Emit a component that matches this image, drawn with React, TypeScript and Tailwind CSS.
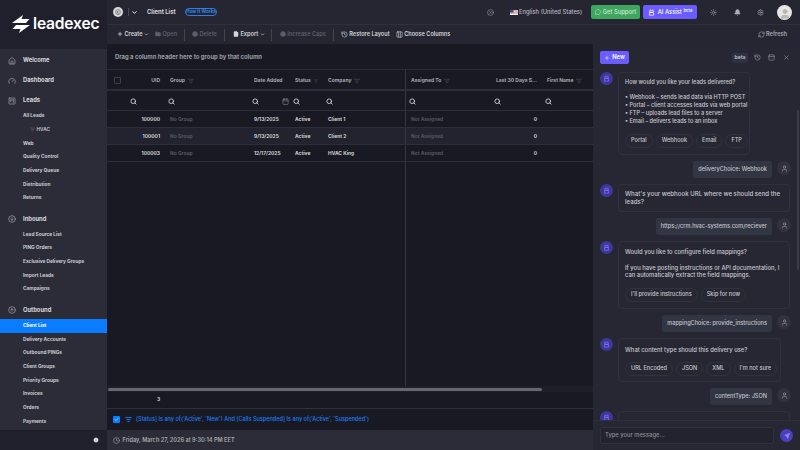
import React from "react";
import {
  Bell,
  Calendar,
  ChevronDown,
  CircleArrowDown,
  CircleArrowUp,
  CircleX,
  Check,
  Clock,
  Columns3,
  FileText,
  Folder,
  Gauge,
  History,
  House,
  Info,
  ListFilter,
  MessageCircle,
  PanelTop,
  Plus,
  RefreshCw,
  Search,
  Send,
  Settings,
  Sun,
  SquareKanban,
  User,
  X,
} from "lucide-react";

// ---- Data ----
const leadLinks = ["All Leads", "HVAC", "Web", "Quality Control", "Delivery Queue", "Distribution", "Returns"];
const inboundLinks = ["Lead Source List", "PING Orders", "Exclusive Delivery Groups", "Import Leads", "Campaigns"];
const outboundLinks = ["Client List", "Delivery Accounts", "Outbound PINGs", "Client Groups", "Priority Groups", "Invoices", "Orders", "Payments"];

const rows = [
  { uid: "100000", date: "9/13/2025", company: "Client 1" },
  { uid: "100001", date: "9/13/2025", company: "Client 2" },
  { uid: "100003", date: "12/17/2025", company: "HVAC King" },
];

const gridCols = "grid grid-cols-[20px_38px_84px_41px_33px_83px_85px_51px_51px]";

// ---- Small drawings ----
function BotIcon({ className }: { className?: string }) {
  return (
    <svg viewBox="0 0 16 16" className={className} fill="none" stroke="currentColor" strokeWidth="1.7">
      <path d="M5 1v3M11 1v3" />
      <path d="M4 4h8v4H4zM4 8h8l1 3v3H3v-3z" />
    </svg>
  );
}

function Logo() {
  return (
    <div className="flex h-[49px] items-center bg-[#1f202c] pl-[12px] pb-[1px]">
      <svg viewBox="0 0 18 18" className="h-[18px] w-[18px] text-white" fill="currentColor">
        <path d="M0 8 L11 0 L9.5 4 H17.5 L14 8 Z" />
        <path d="M18 10 L7 18 L8.5 14 H0.5 L4 10 Z" />
      </svg>
      <span className="ml-[3px] text-[15.6px] leading-none font-semibold tracking-[-0.2px] text-white">leadexec</span>
    </div>
  );
}

function NavHeader({ icon, label, className }: { icon: React.ReactNode; label: string; className?: string }) {
  return (
    <div className={`flex h-[20px] items-center pt-[3px] pl-[7.5px] text-[5.8px] font-bold text-[#d9d9de] ${className ?? ""}`}>
      <span className="flex w-[15.5px] text-[#a5a6ae]">{icon}</span>
      {label}
    </div>
  );
}

function NavLink({ label }: { label: string }) {
  const active = label === "Client List";
  if (label === "HVAC") {
    return (
      <div className="flex h-[13.67px] items-center pl-[30px] text-[4.8px] font-semibold text-[#c4c5cc]">
        <ListFilter className="mr-[1.5px] h-[5px] w-[5px] text-[#777884]" />
        {label}
      </div>
    );
  }
  return (
    <div
      className={`flex h-[13.67px] items-center pl-[23px] text-[4.8px] font-bold ${
        active ? "bg-[#0a7cff] text-white" : "text-[#c9cad0]"
      }`}
    >
      {label}
    </div>
  );
}

function Sidebar() {
  return (
    <aside className="flex h-full w-[107px] shrink-0 flex-col bg-[#2b2c38]">
      <Logo />
      <nav className="flex-1 overflow-hidden">
        <NavHeader icon={<House className="h-[8px] w-[8px]" />} label="Welcome" />
        <NavHeader icon={<Gauge className="h-[8px] w-[8px]" />} label="Dashboard" />
        <NavHeader icon={<SquareKanban className="h-[8px] w-[8px]" />} label="Leads" />
        {leadLinks.map((l) => (
          <NavLink key={l} label={l} />
        ))}
        <NavHeader className="mt-[3px]" icon={<CircleArrowDown className="h-[8px] w-[8px]" />} label="Inbound" />
        {inboundLinks.map((l) => (
          <NavLink key={l} label={l} />
        ))}
        <NavHeader className="mt-[3px]" icon={<CircleArrowUp className="h-[8px] w-[8px]" />} label="Outbound" />
        {outboundLinks.map((l) => (
          <NavLink key={l} label={l} />
        ))}
      </nav>
      <div className="flex h-[20px] items-center justify-end bg-[#1f202c] pr-[8px]">
        <Info className="h-[6px] w-[6px] fill-white text-[#1f202c]" />
      </div>
    </aside>
  );
}

// ---- Top bars ----
function TopBar() {
  return (
    <header className="flex h-[24px] items-center bg-[#252632] text-[#d6d7dc]">
      <span className="ml-[6px] flex h-[10px] w-[10px] items-center justify-center rounded-full bg-[#d8d8da]">
        <CircleArrowDown className="h-[6px] w-[6px] rotate-90 text-[#44454f]" />
      </span>
      <span className="ml-[5px] h-[8px] w-px bg-[#4a4b57]" />
      <ChevronDown className="ml-[2px] h-[7px] w-[7px] stroke-[3] text-white" />
      <span className="ml-[9px] w-[29px] text-[5.9px] font-bold whitespace-nowrap">Client List</span>
      <span className="ml-[9px] flex h-[8px] w-[32px] items-center justify-center rounded-full border border-[#2f7fe0] text-[4.6px] font-semibold whitespace-nowrap text-[#3b8ef0]">
        How It Works
      </span>
      <CircleX className="ml-[270px] h-[7px] w-[7px] text-[#9a9ba3]" />
      <svg viewBox="0 0 8 5" className="ml-[16px] h-[5px] w-[8px]">
        <rect width="8" height="5" fill="#eee" />
        <path d="M0 1h8M0 3h8" stroke="#c5494e" strokeWidth=".7" />
        <rect width="3.4" height="2.6" fill="#3a4f8e" />
      </svg>
      <span className="ml-[1px] w-[72px] text-[5.8px] font-medium whitespace-nowrap text-[#b6b7bf]">English (United States)</span>
      <button className="flex h-[14px] w-[49px] items-center justify-center gap-[2px] rounded-[2px] bg-[#3ea65f] text-[5.8px] font-medium text-[#cfe9d6]">
        <MessageCircle className="h-[6px] w-[6px]" />
        Get Support
      </button>
      <button className="ml-[3px] flex h-[14px] w-[54px] items-center justify-center gap-[3px] rounded-[2px] bg-[#6a5cff] text-[5.8px] font-medium text-white">
        <BotIcon className="h-[7px] w-[7px]" />
        <span>
          AI Assist <sup className="text-[4.2px]">beta</sup>
        </span>
      </button>
      <Sun className="ml-[13px] h-[7px] w-[7px] text-[#aeafb6]" />
      <Bell className="ml-[17px] h-[7px] w-[7px] fill-[#aeafb6] text-[#aeafb6]" />
      <Settings className="ml-[16px] h-[7px] w-[7px] text-[#aeafb6]" />
      <span className="ml-[13px] flex h-[15px] w-[15px] items-end justify-center overflow-hidden rounded-full bg-[#e6e5e0]">
        <User className="h-[12px] w-[12px] fill-[#b9b8b2] text-[#b9b8b2]" />
      </span>
    </header>
  );
}

function ToolButton({ icon, label, dim, caret, className }: { icon: React.ReactNode; label: string; dim?: boolean; caret?: boolean; className?: string }) {
  return (
    <span className={`flex items-center gap-[1.5px] text-[5.6px] font-semibold whitespace-nowrap ${dim ? "text-[#5d5e69]" : "text-[#d5d6db]"} ${className ?? ""}`}>
      {icon}
      {label}
      {caret && <ChevronDown className="h-[5px] w-[5px] stroke-[3]" />}
    </span>
  );
}

function Divider({ className }: { className: string }) {
  return <span className={`h-[12px] w-px bg-[#43444f] ${className}`} />;
}

function Toolbar() {
  return (
    <div className="flex h-[20px] items-center border-t border-[#2f303c] bg-[#252632] pl-[10px]">
      <ToolButton icon={<Plus className="h-[6px] w-[6px] stroke-[3]" />} label="Create" caret />
      <ToolButton className="ml-[6px]" dim icon={<Folder className="h-[6px] w-[6px] fill-current" />} label="Open" />
      <Divider className="ml-[7px]" />
      <ToolButton className="ml-[7px]" dim icon={<CircleX className="h-[6px] w-[6px] fill-current text-[#5d5e69]" />} label="Delete" />
      <Divider className="ml-[7px]" />
      <ToolButton className="ml-[8px]" icon={<FileText className="h-[6px] w-[6px] fill-current" />} label="Export" caret />
      <Divider className="ml-[6px]" />
      <ToolButton className="ml-[8px]" dim icon={<CircleX className="h-[6px] w-[6px] fill-current text-[#5d5e69]" />} label="Increase Caps" />
      <Divider className="ml-[7px]" />
      <ToolButton className="ml-[7px]" icon={<History className="h-[7px] w-[7px]" />} label="Restore Layout" />
      <ToolButton className="ml-[6px]" icon={<Columns3 className="h-[7px] w-[7px]" />} label="Choose Columns" />
      <span className="flex-1" />
      <ToolButton className="mr-[13px] font-medium !text-[#a9aab2]" icon={<RefreshCw className="h-[7px] w-[7px]" />} label="Refresh" />
    </div>
  );
}

// ---- Data grid ----
function HeadCell({ label, filter, right, border }: { label?: string; filter?: boolean; right?: boolean; border?: boolean }) {
  return (
    <div
      className={`flex items-center gap-[3px] px-[5px] pt-[2px] text-[5px] font-bold whitespace-nowrap text-[#a6a7af] ${right ? "justify-end" : ""} ${
        border ? "border-r border-[#353642]" : ""
      }`}
    >
      {label}
      {filter && <ListFilter className="h-[6px] w-[6px] text-[#5e5f6a]" />}
    </div>
  );
}

function SearchCell({ border, calendar }: { border?: boolean; calendar?: boolean }) {
  return (
    <div className={`flex items-center justify-between px-[2.5px] pt-[2px] ${border ? "border-r border-[#353642]" : ""}`}>
      <Search className="h-[7px] w-[7px] stroke-[3] text-[#d5d6db]" />
      {calendar && <Calendar className="mr-[-1px] h-[7px] w-[7px] text-[#8d8e96]" />}
    </div>
  );
}

function DataCell({ children, right, dim, border }: { children?: React.ReactNode; right?: boolean; dim?: boolean; border?: boolean }) {
  return (
    <div
      className={`flex items-center px-[5px] pt-[2px] text-[4.9px] font-bold whitespace-nowrap ${right ? "justify-end" : ""} ${
        dim ? "text-[#55565f]" : "text-[#d0d1d6]"
      } ${border ? "border-r border-[#353642]" : ""}`}
    >
      {children}
    </div>
  );
}

function DataGrid() {
  return (
    <section className="flex h-full w-[486px] shrink-0 flex-col bg-[#181923]">
      <div className="flex h-[26px] items-center border-b border-[#2b2c38] pt-[1px] pl-[8px] text-[5.9px] font-bold text-[#9c9da5]">
        Drag a column header here to group by that column
      </div>

      <div className={`${gridCols} h-[21px] border-b-2 border-[#2d2e3a]`}>
        <div className="flex items-center justify-center pt-[1px] pl-[1px]">
          <span className="h-[7px] w-[7px] rounded-[1px] border border-[#3c3d48]" />
        </div>
        <HeadCell label="UID" right />
        <HeadCell label="Group" filter />
        <HeadCell label="Date Added" />
        <HeadCell label="Status" filter />
        <HeadCell label="Company" filter border />
        <HeadCell label="Assigned To" filter />
        <HeadCell label="Last 30 Days S..." right />
        <HeadCell label="First Name" filter />
      </div>

      <div className={`${gridCols} h-[20px] border-b border-[#2d2e3a]`}>
        <div />
        <SearchCell />
        <SearchCell />
        <SearchCell calendar />
        <SearchCell />
        <SearchCell border />
        <SearchCell />
        <SearchCell />
        <SearchCell />
      </div>

      {rows.map((r, i) => (
        <div key={r.uid} className={`${gridCols} h-[17px] border-b border-[#2d2e3a] ${i === 1 ? "bg-[#22232f]" : ""}`}>
          <div />
          <DataCell right>{r.uid}</DataCell>
          <DataCell dim>No Group</DataCell>
          <DataCell>{r.date}</DataCell>
          <DataCell>Active</DataCell>
          <DataCell border>{r.company}</DataCell>
          <DataCell dim>Not Assigned</DataCell>
          <DataCell right>0</DataCell>
          <DataCell />
        </div>
      ))}

      <div className="min-h-0 flex-1">
        <div className="h-full w-[299px] border-r border-[#353642]" />
      </div>

      <div className="flex h-[6px] items-center bg-[#1e1f29] px-px">
        <div className="h-[3px] w-[434px] rounded-full bg-[#666770]" />
      </div>

      <div className="flex h-[17px] items-center border-b border-[#2f303c] pl-[50px] text-[5px] font-bold text-[#d0d1d6]">3</div>

      <div className="flex h-[21px] items-center bg-[#181923] pl-[6px] text-[5.55px] font-medium text-[#1d7ef0]">
        <span className="flex h-[7px] w-[7px] items-center justify-center rounded-[1px] bg-[#0a7cff]">
          <Check className="h-[5px] w-[5px] stroke-[3] text-[#dbe9ff]" />
        </span>
        <ListFilter className="ml-[5px] h-[7px] w-[7px] stroke-[3]" />
        <span className="ml-[4px] whitespace-nowrap">
          [Status] Is any of('Active', 'New') And [Calls Suspended] Is any of('Active', 'Suspended')
        </span>
      </div>

      <div className="flex h-[20px] items-center gap-[2.5px] bg-[#2b2c38] pl-[6px] text-[5.6px] font-semibold text-[#a6a7af]">
        <Clock className="h-[7px] w-[7px]" />
        Friday, March 27, 2026 at 9:30:14 PM EET
      </div>
    </section>
  );
}

// ---- AI chat ----
function Pill({ label }: { label: string }) {
  return (
    <span className="flex h-[14px] items-center rounded-full border border-[#31323e] px-[5px] text-[5.6px] font-medium whitespace-nowrap text-[#c8c9cf]">
      {label}
    </span>
  );
}

function AiMessage({ children, className }: { children: React.ReactNode; className?: string }) {
  return (
    <div className="flex shrink-0 gap-[5px] pl-[7px]">
      <span className="flex h-[13px] w-[13px] shrink-0 items-center justify-center rounded-full bg-[#3f369c] text-[#7f74f2]">
        <BotIcon className="h-[7px] w-[7px]" />
      </span>
      <div className={`rounded-[4px] border border-[#2f303c] px-[6px] leading-[7.7px] font-medium text-[#c9cad0] ${className ?? ""}`}>
        {children}
      </div>
    </div>
  );
}

function UserMessage({ text }: { text: string }) {
  return (
    <div className="flex shrink-0 items-start justify-end gap-[5px] pr-[9px]">
      <span className="flex h-[17px] items-center rounded-[2px] bg-[#323542] px-[5px] text-[5.6px] font-medium whitespace-nowrap text-[#c4c5cc]">
        {text}
      </span>
      <span className="flex h-[14px] w-[14px] items-center justify-center rounded-full bg-[#31323e]">
        <User className="h-[7px] w-[7px] text-[#a6a7af]" />
      </span>
    </div>
  );
}

function ChatPanel() {
  return (
    <section className="flex h-full min-w-0 flex-1 flex-col bg-[#262733]">
      <div className="flex h-[27px] shrink-0 items-center pr-[10px] pl-[7px]">
        <button className="flex h-[13px] w-[29px] items-center justify-center gap-[2px] rounded-[2px] bg-[#6a5cff] text-[5.8px] font-semibold text-white">
          <Plus className="h-[6px] w-[6px]" />
          New
        </button>
        <span className="flex-1" />
        <span className="flex h-[10px] w-[16px] items-center justify-center rounded-[2px] bg-[#2f3240] text-[5px] font-bold text-[#b6b7bf]">beta</span>
        <History className="ml-[6px] h-[7px] w-[7px] text-[#9a9ba3]" />
        <PanelTop className="ml-[7px] h-[7px] w-[7px] text-[#9a9ba3]" />
        <X className="ml-[8px] h-[7px] w-[7px] text-[#9a9ba3]" />
      </div>

      <div className="relative flex min-h-0 flex-1 flex-col gap-[6px] overflow-hidden pt-px">
        <AiMessage className="h-[83px] w-[132px] pt-[6px] text-[5.6px]">
          <p>How would you like your leads delivered?</p>
          <p className="mt-[7.7px] whitespace-nowrap">• Webhook – sends lead data via HTTP POST</p>
          <p className="whitespace-nowrap">• Portal – client accesses leads via web portal</p>
          <p>• FTP – uploads lead files to a server</p>
          <p>• Email – delivers leads to an inbox</p>
          <div className="mt-[9px] flex gap-[3px]">
            <Pill label="Portal" />
            <Pill label="Webhook" />
            <Pill label="Email" />
            <Pill label="FTP" />
          </div>
        </AiMessage>
        <UserMessage text="deliveryChoice: Webhook" />

        <AiMessage className="h-[28px] w-[172px] pt-[5px] text-[6.1px]">
          <p>What's your webhook URL where we should send the leads?</p>
        </AiMessage>
        <UserMessage text="https://crm.hvac-systems.com/reciever" />

        <AiMessage className="h-[68px] w-[172px] pt-[6px] text-[5.85px]">
          <p>Would you like to configure field mappings?</p>
          <p className="mt-[8px]">If you have posting instructions or API documentation, I can automatically extract the field mappings.</p>
          <div className="mt-[9px] flex gap-[3px]">
            <Pill label="I'll provide instructions" />
            <Pill label="Skip for now" />
          </div>
        </AiMessage>
        <UserMessage text="mappingChoice: provide_instructions" />

        <AiMessage className="h-[44px] w-[163px] pt-[7px] text-[5.85px]">
          <p>What content type should this delivery use?</p>
          <div className="mt-[8px] flex gap-[3px]">
            <Pill label="URL Encoded" />
            <Pill label="JSON" />
            <Pill label="XML" />
            <Pill label="I'm not sure" />
          </div>
        </AiMessage>
        <UserMessage text="contentType: JSON" />

        <AiMessage className="h-[30px] w-[172px]">
          <span />
        </AiMessage>

        <div className="absolute top-[39px] right-[1px] h-[160px] w-[2px] rounded-full bg-[#3a3b47]" />
      </div>

      <div className="flex h-[30px] shrink-0 items-center border-t border-[#2f303c] pr-[7px] pl-[7px]">
        <div className="flex h-[17px] w-[174px] items-center rounded-[2px] border border-[#30313d] bg-[#22232e] pl-[4px] text-[5.8px] font-medium text-[#8d8e96]">
          Type your message...
        </div>
        <span className="ml-[6px] flex h-[13px] w-[13px] items-center justify-center rounded-full bg-[#4a3fc0]">
          <Send className="h-[6px] w-[6px] fill-[#8f88df] text-[#8f88df]" />
        </span>
      </div>
    </section>
  );
}

export default function App() {
  return (
    <div className="flex h-[450px] w-[800px] overflow-hidden bg-[#181923] [font-family:Inter,sans-serif]">
      <Sidebar />
      <main className="flex h-full min-w-0 flex-1 flex-col">
        <TopBar />
        <Toolbar />
        <div className="flex min-h-0 flex-1">
          <DataGrid />
          <ChatPanel />
        </div>
      </main>
    </div>
  );
}
